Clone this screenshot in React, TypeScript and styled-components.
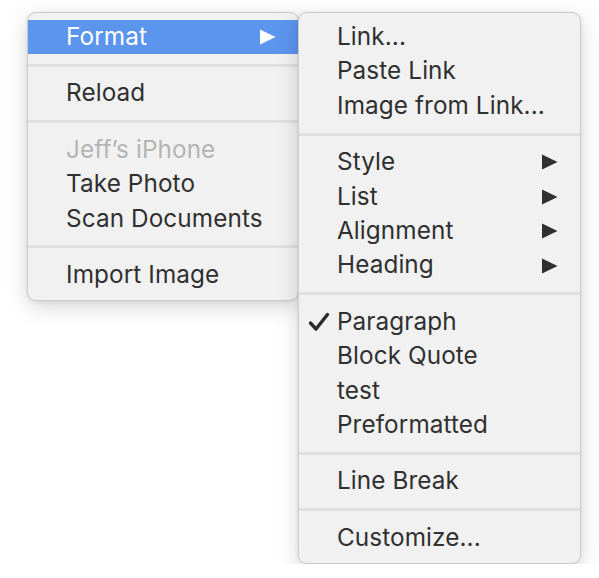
import React from 'react'
import styled, { createGlobalStyle } from 'styled-components'

const GlobalStyle = createGlobalStyle`
  html, body {
    margin: 0;
    padding: 0;
    background: #ffffff;
  }
  body {
    font-family: Inter, "Noto Sans", "Liberation Sans", sans-serif;
    -webkit-font-smoothing: antialiased;
  }
`

type Entry =
  | { kind: 'item'; label: string; submenu?: boolean; checked?: boolean; disabled?: boolean; active?: boolean }
  | { kind: 'sep' }

const mainMenu: Entry[] = [
  { kind: 'item', label: 'Format', submenu: true, active: true },
  { kind: 'sep' },
  { kind: 'item', label: 'Reload' },
  { kind: 'sep' },
  { kind: 'item', label: 'Jeff’s iPhone', disabled: true },
  { kind: 'item', label: 'Take Photo' },
  { kind: 'item', label: 'Scan Documents' },
  { kind: 'sep' },
  { kind: 'item', label: 'Import Image' }
]

const formatMenu: Entry[] = [
  { kind: 'item', label: 'Link...' },
  { kind: 'item', label: 'Paste Link' },
  { kind: 'item', label: 'Image from Link...' },
  { kind: 'sep' },
  { kind: 'item', label: 'Style', submenu: true },
  { kind: 'item', label: 'List', submenu: true },
  { kind: 'item', label: 'Alignment', submenu: true },
  { kind: 'item', label: 'Heading', submenu: true },
  { kind: 'sep' },
  { kind: 'item', label: 'Paragraph', checked: true },
  { kind: 'item', label: 'Block Quote' },
  { kind: 'item', label: 'test' },
  { kind: 'item', label: 'Preformatted' },
  { kind: 'sep' },
  { kind: 'item', label: 'Line Break' },
  { kind: 'sep' },
  { kind: 'item', label: 'Customize...' }
]

function Arrow() {
  return (
    <svg width="17" height="16" viewBox="0 0 17 16">
      <path d="M1 0.5 L16.5 8 L1 15.5 Z" fill="currentColor" />
    </svg>
  )
}

function Check() {
  return (
    <svg width="22" height="20" viewBox="0 0 22 20">
      <path
        d="M2.5 11 L8 17 L19.5 2.5"
        fill="none"
        stroke="currentColor"
        strokeWidth="3.4"
        strokeLinecap="round"
        strokeLinejoin="round"
      />
    </svg>
  )
}

function MenuList({ entries }: { entries: Entry[] }) {
  return (
    <>
      {entries.map((e, i) =>
        e.kind === 'sep' ? (
          <Separator key={i} />
        ) : (
          <Item key={i} $active={e.active} $disabled={e.disabled}>
            <CheckSlot>{e.checked && <Check />}</CheckSlot>
            <Label>{e.label}</Label>
            <ArrowSlot>{e.submenu && <Arrow />}</ArrowSlot>
          </Item>
        )
      )}
    </>
  )
}

export default function App() {
  return (
    <>
      <GlobalStyle />
      <Stage>
        <Menu $width={272}>
          <MenuList entries={mainMenu} />
        </Menu>
        <SubMenu $width={283}>
          <MenuList entries={formatMenu} />
        </SubMenu>
      </Stage>
    </>
  )
}

const Stage = styled.div`
  display: flex;
  align-items: flex-start;
  padding: 12px 0 0 27px;
`

const Menu = styled.div<{ $width: number }>`
  position: relative;
  width: ${p => p.$width}px;
  box-sizing: border-box;
  padding: 7px 0 8px;
  background: #f1f1f1;
  border: 1px solid #cbcbcb;
  border-radius: 9px;
  box-shadow: 0 6px 22px rgba(0, 0, 0, 0.16), 0 1px 4px rgba(0, 0, 0, 0.08);
  overflow: hidden;
`

const SubMenu = styled(Menu)`
  margin-left: -1px;
  z-index: 1;
`

const Item = styled.div<{ $active?: boolean; $disabled?: boolean }>`
  display: grid;
  grid-template-columns: 38px 1fr auto;
  align-items: center;
  height: 34.4px;
  padding-right: 22px;
  font-size: 24.3px;
  letter-spacing: 0.1px;
  background: ${p => (p.$active ? '#5c95ed' : 'transparent')};
  color: ${p => (p.$active ? '#ffffff' : p.$disabled ? '#b4b4b4' : '#303030')};
`

const CheckSlot = styled.span`
  display: flex;
  align-items: center;
  padding-left: 9px;
  color: #2b2b2b;
`

const Label = styled.span`
  white-space: nowrap;
  line-height: 1;
  padding-bottom: 2px;
`

const ArrowSlot = styled.span`
  display: flex;
  align-items: center;
`

const Separator = styled.div`
  height: 22px;
  display: flex;
  align-items: center;

  &::before {
    content: '';
    flex: 1;
    height: 3px;
    background: #e0e0e0;
  }
`
